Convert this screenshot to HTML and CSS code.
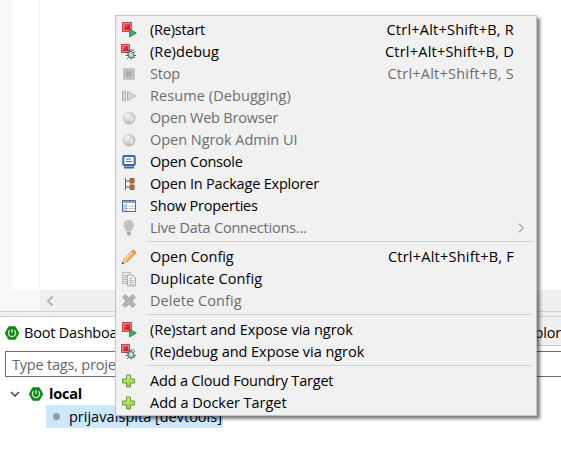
FILE: index.html
```html
<!DOCTYPE html>
<html lang="en">
<head>
<meta charset="utf-8">
<title>Boot Dashboard</title>
<link rel="stylesheet" href="styles.css">
</head>
<body>
<svg width="0" height="0" class="defs" aria-hidden="true">
  <defs>
    <linearGradient id="g-red" x1="0" y1="0" x2="1" y2="1"><stop offset="0" stop-color="#f0606a"/><stop offset=".5" stop-color="#e02a38"/><stop offset="1" stop-color="#d81424"/></linearGradient>
    <linearGradient id="g-plus" x1="0" y1="0" x2="0" y2="1"><stop offset="0" stop-color="#e0ec70"/><stop offset="1" stop-color="#8fc838"/></linearGradient>
    <radialGradient id="g-ball" cx=".4" cy=".35" r=".7"><stop offset="0" stop-color="#eee"/><stop offset=".6" stop-color="#ccc"/><stop offset="1" stop-color="#aaa"/></radialGradient>
    <symbol id="restart" viewBox="0 0 16 16"><rect x="1.500" y=".5" width="9" height="9" fill="#f08088" stroke="#c84450"/><rect x="3" y="2" width="6" height="6" fill="url(#g-red)"/><path d="M8.500 7 15.300 11 8.500 15z" fill="#48a868" stroke="#287c48" stroke-width=".8"/></symbol>
    <symbol id="redebug" viewBox="0 0 16 16"><rect x=".5" y=".5" width="8" height="8" fill="#f08088" stroke="#c84450"/><rect x="2" y="2" width="5" height="5" fill="url(#g-red)"/><path d="M5 8l9 6M14 7l-8 8M4.500 11.500h10.500M10 5v10.500M7 5.500l1 2M12.500 5l-1 2" stroke="#345a50" stroke-width=".9"/><ellipse cx="10" cy="10.700" rx="2.600" ry="3.200" transform="rotate(-35 10 10.7)" fill="#c4dcc0" stroke="#47736a"/></symbol>
    <symbol id="stop" viewBox="0 0 16 16"><rect x="3" y="3" width="10" height="10" fill="#c8c8c8" stroke="#a6a6a6"/><rect x="5" y="5" width="6" height="6" fill="#acacac"/></symbol>
    <symbol id="resume" viewBox="0 0 16 16"><path d="M1.500 3.500h3v9h-3zM6.500 3.500v9l8-4.500z" fill="#d6d6d6" stroke="#b0b0b0"/></symbol>
    <symbol id="ball" viewBox="0 0 16 16"><circle cx="8" cy="8" r="6.400" fill="url(#g-ball)"/><path d="M4 4l3-1 2 3-3 3-3-1zM9 8l3-2 1 4-3 3z" fill="#f0f0f0" opacity=".65"/></symbol>
    <symbol id="console" viewBox="0 0 16 16"><rect x="2.300" y="2" width="11.400" height="9" rx=".7" fill="#fff" stroke="#3d66a8" stroke-width="2"/><path d="M5 5h5M5 7.500h6" stroke="#5c6c88"/><path d="M3 13.500h10" stroke="#3d66a8" stroke-width="2"/></symbol>
    <symbol id="package" viewBox="0 0 16 16"><path d="M4.500 2v12M5 5h4M5 11h4" stroke="#56688c" fill="none"/><path d="M9 2.500h4v4.500H9zM9 9h4v4.500H9z" fill="#e89c48" stroke="#9c5428"/><path d="M11 2.500v4.500M9 4.750h4M11 9v4.500M9 11.250h4" stroke="#8c481c" stroke-width=".8"/></symbol>
    <symbol id="table" viewBox="0 0 16 16"><path d="M1.500 2.500h13v11h-13z" fill="#fff" stroke="#57698f"/><path d="M2 3h12v2H2z" fill="#8ca4c8"/><path d="M2 6h3.500v7H2z" fill="#c8daf2"/><path d="M5.500 5v8M2 8h12M2 10.500h12" stroke="#9dafcc" stroke-width=".7"/></symbol>
    <symbol id="bulb" viewBox="0 0 16 16"><path d="M5.500 11C5.500 9 3 8 3 5a4.700 4.700 0 0 1 9.400 0c0 3-2.500 4-2.500 6z" fill="#c0c0c0" stroke="#aaa" stroke-width=".6"/><path d="M6 12h3.800v2L9 15.500H7L6 14z" fill="#a6a6a6"/><path d="M5 5c.3-2 1.300-2.500 2.400-2.700" stroke="#ddd" fill="none"/></symbol>
    <symbol id="pencil" viewBox="0 0 16 16"><path d="M1 15l2-5 8-8c2-1.600 4.500.4 3.200 2.600L6 12.800z" fill="#f3b65c" stroke="#b87832" stroke-width=".8"/><path d="M3.500 10.500 11.500 3" stroke="#ffdf9e" stroke-width="1.500"/><path d="M1 15l2-5 3 2.800z" fill="#ead2a8"/><path d="M.7 15.300l1-2.300L3 14.400z" fill="#343434"/><path d="M11 2c2-1.600 4.500.4 3.200 2.600l-1 1L10 3z" fill="#e49b70"/></symbol>
    <symbol id="copy" viewBox="0 0 16 16"><path d="M1.500 1.500h8v11h-8z" fill="#e8e8e8" stroke="#bcbcbc"/><path d="M2.500 4.500h3M2.500 6.500h3M2.500 8.500h3M2.500 10.500h3" stroke="#b0b0b0"/><path d="M6.500 4h5.500l2.500 2.500v8.500h-8z" fill="#eee" stroke="#aaa"/><path d="M8.500 7.500h3M8.500 9.500h4.500M8.500 11.500h4.500M8.500 13.500h4" stroke="#aaa" stroke-width=".8"/></symbol>
    <symbol id="delete" viewBox="0 0 16 16"><path d="M4.200 1.500 8 5l3.800-3.500L14.500 4.200 11 8l3.500 3.800-2.700 2.700L8 11l-3.800 3.500-2.700-2.700L5 8 1.500 4.200z" fill="#b4b4b4" stroke="#a0a0a0" stroke-width=".8"/></symbol>
    <symbol id="plus" viewBox="0 0 16 16"><path d="M5.500 2h4v4h4v4h-4v4h-4v-4h-4V6h4z" fill="url(#g-plus)" stroke="#659b45"/></symbol>
    <symbol id="boot" viewBox="0 0 14 14"><path d="M3.700.8h6.600L13.700 7l-3.400 6.200H3.700L.3 7z" fill="#118a13" stroke="#118a13" stroke-linejoin="round"/><path d="M4.700 4.200a3.600 3.600 0 1 0 4.600 0M7 3v4" fill="none" stroke="#d8efd8" stroke-width="1.200"/></symbol>
  </defs>
</svg>
<div class="window">
  <div class="editor"><div class="gutter"></div><div class="margin"></div></div>
  <div class="scroll-row"><div class="corner"></div><div class="scrollbar"><svg width="8" height="12" viewBox="0 0 8 12"><path d="M6.500 1.500 2 6l4.500 4.500" fill="none" stroke="#b4b4b4" stroke-width="2"/></svg></div></div>
  <div class="sash"></div>
  <div class="tabs"><div class="tab"><svg class="boot"><use href="#boot"/></svg><span>Boot Dashboard</span></div><div class="tab-rest"><span>Package Explor</span></div></div>
  <div class="search"><span>Type tags, projects</span></div>
  <div class="tree">
    <div class="node"><svg class="chevron" viewBox="0 0 10 6"><path d="M1 1l4 4 4-4" fill="none" stroke="#444" stroke-width="1.500"/></svg><svg class="boot"><use href="#boot"/></svg><b>local</b></div>
    <div class="leaf"><i class="dot"></i><span>prijavaIspita [devtools]</span></div>
  </div>
</div>
<div class="menu">
  <div class="item"><svg><use href="#restart"/></svg><span>(Re)start</span><kbd>Ctrl+Alt+Shift+B, R</kbd></div>
  <div class="item wider"><svg><use href="#redebug"/></svg><span>(Re)debug</span><kbd>Ctrl+Alt+Shift+B, D</kbd></div>
  <div class="item off"><svg><use href="#stop"/></svg><span>Stop</span><kbd>Ctrl+Alt+Shift+B, S</kbd></div>
  <div class="item off wider"><svg><use href="#resume"/></svg><span>Resume (Debugging)</span></div>
  <div class="item off"><svg><use href="#ball"/></svg><span>Open Web Browser</span></div>
  <div class="item off wide"><svg><use href="#ball"/></svg><span>Open Ngrok Admin UI</span></div>
  <div class="item"><svg><use href="#console"/></svg><span>Open Console</span></div>
  <div class="item"><svg><use href="#package"/></svg><span>Open In Package Explorer</span></div>
  <div class="item"><svg><use href="#table"/></svg><span>Show Properties</span></div>
  <div class="item off"><svg><use href="#bulb"/></svg><span>Live Data Connections...</span><svg class="arrow" viewBox="0 0 7 10"><path d="M1 .8 5.200 5 1 9.200" fill="none" stroke="#a8a8a8" stroke-width="1.300"/></svg></div>
  <div class="sep"></div>
  <div class="item wide"><svg><use href="#pencil"/></svg><span>Open Config</span><kbd>Ctrl+Alt+Shift+B, F</kbd></div>
  <div class="item wider"><svg><use href="#copy"/></svg><span>Duplicate Config</span></div>
  <div class="item off wider"><svg><use href="#delete"/></svg><span>Delete Config</span></div>
  <div class="sep"></div>
  <div class="item wide"><svg><use href="#restart"/></svg><span>(Re)start and Expose via ngrok</span></div>
  <div class="item wide"><svg><use href="#redebug"/></svg><span>(Re)debug and Expose via ngrok</span></div>
  <div class="sep"></div>
  <div class="item"><svg><use href="#plus"/></svg><span>Add a Cloud Foundry Target</span></div>
  <div class="item wide"><svg><use href="#plus"/></svg><span>Add a Docker Target</span></div>
</div>
</body>
</html>
```
FILE: styles.css
```css
* { box-sizing: border-box; }
body { margin: 0; width: 561px; height: 453px; overflow: hidden; background: #fff; font: 14.5px/22px "Open Sans", "Noto Sans", sans-serif; letter-spacing: -0.2px; color: #000; white-space: nowrap; }
.defs { position: absolute; }
.editor { display: flex; height: 290px; }
.gutter { width: 12px; background: #f8f8f8; }
.margin { width: 28px; border-right: 1px solid #f0f0f0; }
.scroll-row { display: flex; height: 21px; }
.corner { width: 40px; background: #f8f8f8; }
.scrollbar { flex: 1; padding: 5px 6px; background: #f0f0f0; line-height: 0; }
.sash { height: 6px; background: #f0f0f0; border: solid #d0d0d0; border-width: 1px 0; }
.tabs { display: flex; height: 34px; }
.tab { display: flex; align-items: center; width: 240px; height: 31px; padding-left: 5px; gap: 5px; }
.boot { width: 14px; height: 14px; flex: none; }
.tab-rest { flex: 1; height: 34px; display: flex; justify-content: flex-end; background: linear-gradient(#f0f0f0 28px, #d0d0d0 28px, #d0d0d0 29px, #fff 29px); }
.tab-rest span { padding-top: 5px; }
.search { height: 26px; margin-left: 5px; border: 1px solid #6e6e6e; border-right: 0; padding-left: 6px; color: #666; line-height: 26px; }
.tree { padding-top: 6px; }
.node { display: flex; align-items: center; height: 22px; padding-left: 10px; }
.chevron { width: 10px; height: 6px; margin-right: 9px; }
.node b { margin-left: 6px; }
.leaf { display: flex; align-items: center; width: 177px; height: 23px; margin-left: 46px; padding-left: 7px; background: #cce8ff; letter-spacing: 0; }
.dot { width: 7px; height: 7px; border-radius: 50%; background: #999; margin-right: 9px; }
.menu { position: absolute; left: 115px; top: 15px; width: 422px; height: 401px; padding: 3px 2px; border: 1px solid #c4c4c4; background: #f1f1f1; box-shadow: 3px 3px 3px rgba(0,0,0,.5); }
.item { display: flex; align-items: center; height: 22px; padding: 0 20px 0 3px; }
.item svg { width: 16px; height: 16px; flex: none; margin-right: 13px; }
.item kbd { margin-left: auto; font: inherit; letter-spacing: 0.23px; }
.item svg.arrow { width: 7px; height: 10px; margin: 0 -11px 0 auto; }
.off { color: #6d6d6d; }
.wide { letter-spacing: -0.04px; }
.wider { letter-spacing: 0.08px; }
.sep { height: 7px; margin: 0 1px 0 28px; padding-top: 2px; }
.sep::before { content: ""; display: block; height: 1px; background: #d4d4d4; }
```
